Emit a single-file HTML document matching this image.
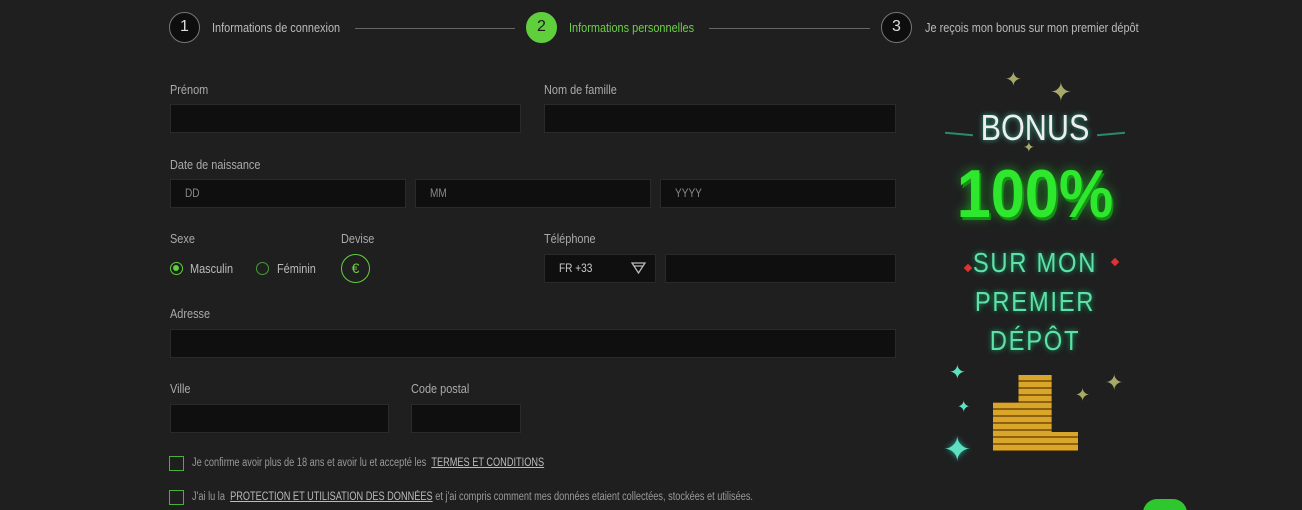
<!DOCTYPE html>
<html><head><meta charset="utf-8"><style>
*{margin:0;padding:0;box-sizing:border-box}
html,body{width:1302px;height:510px;overflow:hidden}
body{background:#1f1f20;position:relative;font-family:"Liberation Sans",sans-serif;color:#aaa}
.a{position:absolute}
.n{transform:scaleX(.84);transform-origin:left center;white-space:nowrap}
.c{border-radius:50%;width:31px;height:31px;border:1.5px solid #777;background:#0e0e0e;color:#ddd;font-size:16px;text-align:center;line-height:28px}
.st{font-size:13px;color:#bbb}
.ln{height:1px;background:#666}
.lb{font-size:13px;color:#aaa}
.in{background:#0f0f10;border:1px solid #2a2a2a;height:29px;font-size:12px;color:#888;padding-left:14px;line-height:27px}
.cb{width:15px;height:15px;border:1.5px solid #4caf3c}
.t{font-size:11.5px;color:#9a9a9a;transform:scaleX(.8);transform-origin:left center;white-space:nowrap}
u{color:#bbb}
</style></head><body>
<div class="a c" style="left:169px;top:12px">1</div>
<div class="a st n" style="left:212px;top:20px">Informations de connexion</div>
<div class="a ln" style="left:355px;top:28px;width:160px"></div>
<div class="a c" style="left:526px;top:12px;background:#5fcf3c;border-color:#5fcf3c;color:#1a1a1a">2</div>
<div class="a st n" style="left:569px;top:20px;color:#6ed046">Informations personnelles</div>
<div class="a ln" style="left:709px;top:28px;width:161px"></div>
<div class="a c" style="left:881px;top:12px">3</div>
<div class="a st n" style="left:925px;top:20px">Je reçois mon bonus sur mon premier dépôt</div>

<div class="a lb n" style="left:170px;top:82px">Prénom</div>
<div class="a in" style="left:170px;top:104px;width:351px"></div>
<div class="a lb n" style="left:544px;top:82px">Nom de famille</div>
<div class="a in" style="left:544px;top:104px;width:352px"></div>

<div class="a lb n" style="left:170px;top:157px">Date de naissance</div>
<div class="a in" style="left:170px;top:179px;width:236px"><span class="n" style="display:inline-block">DD</span></div>
<div class="a in" style="left:415px;top:179px;width:236px"><span class="n" style="display:inline-block">MM</span></div>
<div class="a in" style="left:660px;top:179px;width:236px"><span class="n" style="display:inline-block">YYYY</span></div>

<div class="a lb n" style="left:170px;top:231px">Sexe</div>
<div class="a" style="left:170px;top:262px;width:13px;height:13px;border-radius:50%;border:1.5px solid #5fcf3c"><div style="margin:2px;width:6px;height:6px;border-radius:50%;background:#5fcf3c"></div></div>
<div class="a n" style="left:190px;top:261px;font-size:13px;color:#bbb">Masculin</div>
<div class="a" style="left:256px;top:262px;width:13px;height:13px;border-radius:50%;border:1.5px solid #4a9a3a"></div>
<div class="a n" style="left:277px;top:261px;font-size:13px;color:#bbb">Féminin</div>
<div class="a lb n" style="left:341px;top:231px">Devise</div>
<div class="a" style="left:341px;top:254px;width:29px;height:29px;border-radius:50%;border:1.5px solid #5fcf3c;color:#6ed046;text-align:center;line-height:26px;font-size:14px">€</div>
<div class="a lb n" style="left:544px;top:231px">Téléphone</div>
<div class="a in" style="left:544px;top:254px;width:112px;color:#ccc"><span class="n" style="display:inline-block">FR +33</span></div>
<svg class="a" style="left:631px;top:262px" width="15" height="12"><path d="M1 1H14L7.5 11Z M3 4H12" fill="none" stroke="#bbb" stroke-width="1.3"/></svg>
<div class="a in" style="left:665px;top:254px;width:231px"></div>

<div class="a lb n" style="left:170px;top:306px">Adresse</div>
<div class="a in" style="left:170px;top:329px;width:726px"></div>
<div class="a lb n" style="left:170px;top:381px">Ville</div>
<div class="a in" style="left:170px;top:404px;width:219px"></div>
<div class="a lb n" style="left:411px;top:381px">Code postal</div>
<div class="a in" style="left:411px;top:404px;width:110px"></div>

<div class="a cb" style="left:169px;top:456px"></div>
<div class="a t" style="left:192px;top:457px">Je confirme avoir plus de 18 ans et avoir lu et accepté les &nbsp;<u>TERMES ET CONDITIONS</u></div>
<div class="a cb" style="left:169px;top:490px"></div>
<div class="a t" style="left:192px;top:491px">J'ai lu la &nbsp;<u>PROTECTION ET UTILISATION DES DONNÉES</u> et j'ai compris comment mes données etaient collectées, stockées et utilisées.</div>

<div class="a" style="left:935px;top:55px;width:200px;height:420px">
 <div class="a" style="left:0;top:52px;width:200px;text-align:center;font-size:36px;color:#eee;text-shadow:0 0 6px #3a8;transform:scaleX(.85)">BONUS</div>
 <div class="a" style="left:10px;top:78px;width:28px;height:2px;background:#2a8a6a;transform:rotate(5deg)"></div>
 <div class="a" style="left:162px;top:78px;width:28px;height:2px;background:#2a8a6a;transform:rotate(-5deg)"></div>
 <div class="a" style="left:0;top:100px;width:200px;text-align:center;font-weight:bold;font-size:68px;color:#2ee82e;text-shadow:0 0 12px #1f9a1f,2px 3px 0 #138a13;transform:scaleX(.9)">100%</div>
 <div class="a" style="left:0;top:188px;width:200px;text-align:center;font-size:28px;letter-spacing:2px;color:#5fe0a8;line-height:39px;text-shadow:0 0 6px #1a6;transform:scaleX(.85)">SUR MON<br>PREMIER<br>DÉPÔT</div>
 <div class="a" style="left:30px;top:210px;width:6px;height:6px;background:#d33;transform:rotate(45deg)"></div>
 <div class="a" style="left:177px;top:204px;width:6px;height:6px;background:#d33;transform:rotate(45deg)"></div>
 <div class="a" style="left:58px;top:320px;width:85px;height:76px;background:repeating-linear-gradient(#d9a62a 0 5px,#8c6212 5px 7px);clip-path:polygon(30% 0,69% 0,69% 75%,100% 75%,100% 100%,0 100%,0 36%,30% 36%)"></div>
 <div class="a" style="left:8px;top:375px;color:#5fe0c0;font-size:34px;text-shadow:0 0 6px #2a9">✦</div>
 <div class="a" style="left:14px;top:305px;color:#5fe0c0;font-size:20px">✦</div>
 <div class="a" style="left:22px;top:342px;color:#5fe0c0;font-size:16px">✦</div>
 <div class="a" style="left:170px;top:315px;color:#a8a86a;font-size:22px">✦</div>
 <div class="a" style="left:140px;top:330px;color:#a8a86a;font-size:18px">✦</div>
 <div class="a" style="left:115px;top:22px;color:#a8a86a;font-size:26px">✦</div>
 <div class="a" style="left:70px;top:12px;color:#a8a86a;font-size:20px">✦</div>
 <div class="a" style="left:88px;top:84px;color:#a8a86a;font-size:14px">✦</div>
</div>
<div class="a" style="left:1143px;top:499px;width:44px;height:30px;border-radius:14px 14px 0 0;background:#2ec82e"></div>
</body></html>
